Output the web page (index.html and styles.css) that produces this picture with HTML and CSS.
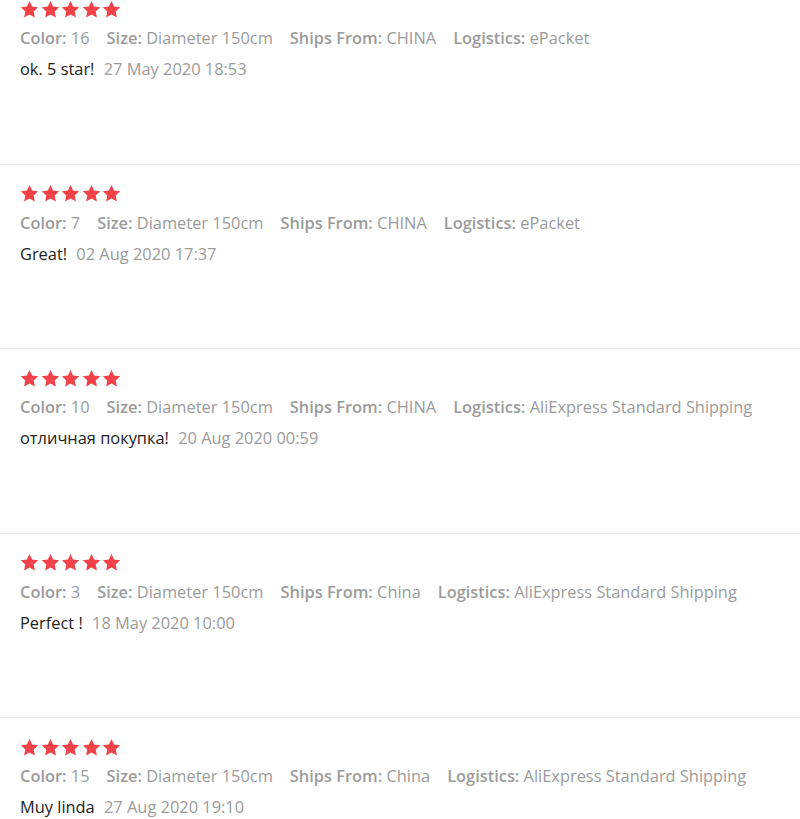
FILE: index.html
```html
<!DOCTYPE html>
<html lang="en">
<head>
  <meta charset="UTF-8">
  <title>Feedback</title>
  <link rel="stylesheet" href="styles.css">
</head>
<body>
  <svg width="0" height="0" class="defs">
    <defs>
      <symbol id="star" viewBox="0 0 24 24">
        <path d="M12 1.2l3.3 7.1 7.7.9-5.7 5.3 1.5 7.7L12 18.4l-6.8 3.8 1.5-7.7L1 9.2l7.7-.9z"/>
      </symbol>
    </defs>
  </svg>
  <div class="feedback-list">
    <div class="review">
      <div class="stars">
        <svg><use href="#star"/></svg><svg><use href="#star"/></svg><svg><use href="#star"/></svg><svg><use href="#star"/></svg><svg><use href="#star"/></svg>
      </div>
      <div class="meta">
        <span><b>Color:</b> 16</span>
        <span><b>Size:</b> Diameter 150cm</span>
        <span><b>Ships From:</b> CHINA</span>
        <span><b>Logistics:</b> ePacket</span>
      </div>
      <div class="comment">ok. 5 star! <span class="date">27 May 2020 18:53</span></div>
    </div>

    <div class="review">
      <div class="stars">
        <svg><use href="#star"/></svg><svg><use href="#star"/></svg><svg><use href="#star"/></svg><svg><use href="#star"/></svg><svg><use href="#star"/></svg>
      </div>
      <div class="meta">
        <span><b>Color:</b> 7</span>
        <span><b>Size:</b> Diameter 150cm</span>
        <span><b>Ships From:</b> CHINA</span>
        <span><b>Logistics:</b> ePacket</span>
      </div>
      <div class="comment">Great! <span class="date">02 Aug 2020 17:37</span></div>
    </div>

    <div class="review">
      <div class="stars">
        <svg><use href="#star"/></svg><svg><use href="#star"/></svg><svg><use href="#star"/></svg><svg><use href="#star"/></svg><svg><use href="#star"/></svg>
      </div>
      <div class="meta">
        <span><b>Color:</b> 10</span>
        <span><b>Size:</b> Diameter 150cm</span>
        <span><b>Ships From:</b> CHINA</span>
        <span><b>Logistics:</b> AliExpress Standard Shipping</span>
      </div>
      <div class="comment">отличная покупка! <span class="date">20 Aug 2020 00:59</span></div>
    </div>

    <div class="review">
      <div class="stars">
        <svg><use href="#star"/></svg><svg><use href="#star"/></svg><svg><use href="#star"/></svg><svg><use href="#star"/></svg><svg><use href="#star"/></svg>
      </div>
      <div class="meta">
        <span><b>Color:</b> 3</span>
        <span><b>Size:</b> Diameter 150cm</span>
        <span><b>Ships From:</b> China</span>
        <span><b>Logistics:</b> AliExpress Standard Shipping</span>
      </div>
      <div class="comment">Perfect ! <span class="date">18 May 2020 10:00</span></div>
    </div>

    <div class="review">
      <div class="stars">
        <svg><use href="#star"/></svg><svg><use href="#star"/></svg><svg><use href="#star"/></svg><svg><use href="#star"/></svg><svg><use href="#star"/></svg>
      </div>
      <div class="meta">
        <span><b>Color:</b> 15</span>
        <span><b>Size:</b> Diameter 150cm</span>
        <span><b>Ships From:</b> China</span>
        <span><b>Logistics:</b> AliExpress Standard Shipping</span>
      </div>
      <div class="comment">Muy linda <span class="date">27 Aug 2020 19:10</span></div>
    </div>
  </div>
</body>
</html>
```

FILE: styles.css
```css
body {
  margin: 0;
  background: #fff;
  font-family: "Open Sans", "Liberation Sans", sans-serif;
  font-size: 16.4px;
  color: #333;
  overflow: hidden;
}
.defs {
  position: absolute;
}
.feedback-list {
  margin-top: -21px;
}
.review {
  box-sizing: border-box;
  height: 184.5px;
  padding: 19.5px 20px 0;
  border-top: 1px solid #e6e6e6;
}
.stars {
  display: flex;
  gap: 1.5px;
  height: 19px;
}
.stars svg {
  width: 19px;
  height: 19px;
  fill: #f2434a;
}
.meta {
  display: flex;
  gap: 17px;
  margin-top: 8.5px;
  line-height: 22px;
  color: #9b9b9b;
}
.meta b {
  font-weight: 600;
}
.comment {
  margin-top: 9px;
  line-height: 22px;
  color: #222;
}
.date {
  margin-left: 5px;
  color: #9b9b9b;
}
```
